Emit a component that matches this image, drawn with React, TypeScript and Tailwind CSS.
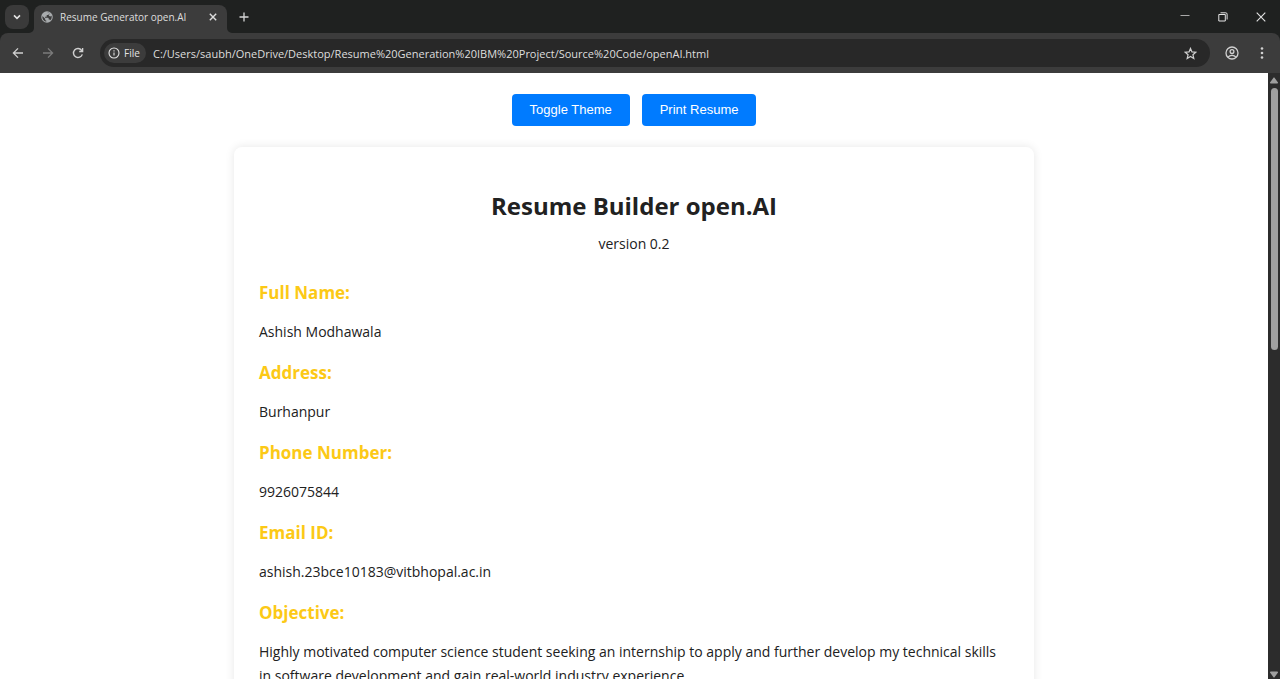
import type { ReactNode } from "react";

const sections = [
  { title: "Full Name:", text: "Ashish Modhawala" },
  { title: "Address:", text: "Burhanpur" },
  { title: "Phone Number:", text: "9926075844" },
  { title: "Email ID:", text: "ashish.23bce10183@vitbhopal.ac.in" },
  {
    title: "Objective:",
    text: "Highly motivated computer science student seeking an internship to apply and further develop my technical skills in software development and gain real-world industry experience.",
  },
];

function IconButton({ label, className, children }: { label: string; className: string; children: ReactNode }) {
  return (
    <button type="button" aria-label={label} className={`flex shrink-0 items-center justify-center ${className}`}>
      {children}
    </button>
  );
}

function TabStrip() {
  return (
    <div className="flex h-[33px] shrink-0 items-end bg-[#1f2120] pl-[5px]">
      <IconButton label="Search tabs" className="mb-1 h-6 w-6 rounded-lg bg-[#3a3a3a] text-[#e3e3e3]">
        <svg width="10" height="10" viewBox="0 0 10 10" fill="none" stroke="currentColor" strokeWidth="1.6">
          <path d="M2 3.4 5 6.4 8 3.4" />
        </svg>
      </IconButton>
      <svg width="5" height="5" viewBox="0 0 5 5" fill="#3c3c3c" className="shrink-0">
        <path d="M5 0v5H0A5 5 0 0 0 5 0Z" />
      </svg>
      <div className="flex h-7 w-[193px] items-center rounded-t-lg bg-[#3c3c3c] pr-2 pb-1 pl-[7px] text-[#dedede]">
        <svg width="12" height="12" viewBox="0 0 24 24" className="shrink-0">
          <circle cx="12" cy="12" r="11.5" fill="#a8abad" />
          <path
            d="M12 2.6c2 0 3.900.6 5.400 1.700l-1.500 2.400c-.5.8-1.300 1.300-2.200 1.300h-2.300v2.300c0 .6-.5 1.100-1.100 1.100H8v2.300h5.400c1.200 0 2 .9 2 2v1.200h1.200c1.100 0 2 .7 2.300 1.600A9.400 9.400 0 0 0 21.400 12c0-.9-.1-1.800-.4-2.600l-2.400 1.500-3.200-1.200 2.200-5.200"
            fill="#3c3c3c"
          />
          <path d="M2.900 10 8.300 15.500v1.300c0 1.200 1 2.200 2.200 2.200v2.300A9.400 9.400 0 0 1 2.900 10Z" fill="#3c3c3c" />
        </svg>
        <span className="ml-[7px] flex-1 text-[10px] leading-4 whitespace-nowrap">Resume Generator open.AI</span>
        <IconButton label="Close tab" className="h-3 w-3">
          <svg width="10" height="10" viewBox="0 0 10 10" fill="none" stroke="currentColor" strokeWidth="1.4">
            <path d="m1.800 1.800 6.400 6.400M8.200 1.800 1.800 8.200" />
          </svg>
        </IconButton>
      </div>
      <svg width="5" height="5" viewBox="0 0 5 5" fill="#3c3c3c" className="shrink-0">
        <path d="M0 0v5h5A5 5 0 0 1 0 0Z" />
      </svg>
      <IconButton label="New tab" className="mb-2 ml-1 h-4 w-4 text-[#d6d6d6]">
        <svg width="10" height="10" viewBox="0 0 10 10" fill="none" stroke="currentColor" strokeWidth="1.300">
          <path d="M5 .5v9M.5 5h9" />
        </svg>
      </IconButton>
      <div className="ml-auto flex h-full text-[#e4e4e4]">
        <IconButton label="Minimize" className="w-[38px]">
          <svg width="10" height="10" viewBox="0 0 10 10" fill="none" stroke="currentColor" strokeOpacity="0.7">
            <path d="M.5 3.500h9" />
          </svg>
        </IconButton>
        <IconButton label="Restore" className="w-[38px]">
          <svg width="10" height="10" viewBox="0 0 10 10" fill="none" stroke="currentColor">
            <path d="M.8 2.500h6.500v6.500H.8zM2.500.8h5.300c.8 0 1.300.5 1.300 1.300v5.400" />
          </svg>
        </IconButton>
        <IconButton label="Close window" className="w-[38px]">
          <svg width="10" height="10" viewBox="0 0 10 10" fill="none" stroke="currentColor" strokeWidth="1.100">
            <path d="m.7.7 8.600 8.600M9.300.7.700 9.300" />
          </svg>
        </IconButton>
      </div>
    </div>
  );
}

function Toolbar() {
  return (
    <div className="bg-[#1f2120]">
      <div className="flex h-10 items-center rounded-t-lg bg-[#3c3c3c] pr-[10px] pl-[10px] text-[#d0d0d0]">
        <IconButton label="Back" className="h-4 w-4">
          <svg width="12" height="12" viewBox="0 0 12 12" fill="none" stroke="currentColor" strokeWidth="1.300">
            <path d="M11 6H1.600M6 1.400 1.400 6 6 10.600" />
          </svg>
        </IconButton>
        <IconButton label="Forward" className="ml-[14px] h-4 w-4 text-[#7b7b7b]">
          <svg width="12" height="12" viewBox="0 0 12 12" fill="none" stroke="currentColor" strokeWidth="1.300">
            <path d="M1 6h9.400M6 1.400 10.600 6 6 10.600" />
          </svg>
        </IconButton>
        <IconButton label="Reload" className="ml-[14px] h-4 w-4">
          <svg width="12" height="12" viewBox="0 0 12 12" fill="none" stroke="currentColor" strokeWidth="1.400">
            <path d="M10.300 7.400A4.500 4.500 0 1 1 9.600 3.300L10.500 4.300M10.600 1v3.500H7.200" />
          </svg>
        </IconButton>
        <div className="ml-[14px] flex h-7 flex-1 items-center rounded-full bg-[#282828] pr-3 pl-1">
          <button
            type="button"
            className="flex h-5 w-[42px] shrink-0 items-center gap-1 rounded-full bg-[#3c3c3c] pl-1 text-[10px] font-medium text-[#e3e3e3]"
          >
            <svg width="12" height="12" viewBox="0 0 12 12" fill="none" stroke="currentColor" strokeWidth="1.100">
              <circle cx="6" cy="6" r="5" />
              <path d="M6 5.400v3.200M6 3.200v1.200" />
            </svg>
            File
          </button>
          <input
            type="text"
            aria-label="Address"
            defaultValue="C:/Users/saubh/OneDrive/Desktop/Resume%20Generation%20IBM%20Project/Source%20Code/openAI.html"
            className="ml-[7px] h-6 min-w-0 flex-1 bg-transparent text-[11px] text-[#dedede] outline-none"
          />
          <IconButton label="Bookmark this page" className="h-4 w-4">
            <svg width="13" height="13" viewBox="0 0 14 14" fill="none" stroke="currentColor" strokeWidth="1.300">
              <path d="m7 1.500 1.600 3.800 4.100.35-3.100 2.700.95 4L7 10.200l-3.550 2.150.95-4-3.100-2.700 4.100-.35Z" />
            </svg>
          </IconButton>
        </div>
        <IconButton label="Profile" className="ml-[14px] h-4 w-4">
          <svg width="14" height="14" viewBox="0 0 14 14" fill="none" stroke="currentColor" strokeWidth="1.300">
            <circle cx="7" cy="7" r="6" />
            <circle cx="7" cy="5.600" r="1.900" />
            <path d="M3 11.200C4.100 9.900 5.500 9.400 7 9.400s2.900.5 4 1.800" />
          </svg>
        </IconButton>
        <IconButton label="Menu" className="ml-[14px] h-4 w-4">
          <svg width="12" height="14" viewBox="0 0 12 14" fill="currentColor">
            <circle cx="6" cy="2.500" r="1.300" />
            <circle cx="6" cy="7" r="1.300" />
            <circle cx="6" cy="11.500" r="1.300" />
          </svg>
        </IconButton>
      </div>
    </div>
  );
}

function ScrollTrack() {
  return (
    <div aria-hidden="true" className="flex w-3 shrink-0 flex-col items-center bg-[#2c2c2c] pt-1">
      <svg width="8" height="7" viewBox="0 0 8 7" fill="#9f9f9f" className="shrink-0">
        <path d="M3.500.700Q4 0 4.500.700L8 5.500Q8.200 6.500 7.300 6.500H.700Q-.2 6.500 0 5.500Z" />
      </svg>
      <div className="mt-1 h-[262px] w-[7px] rounded-full bg-[#9f9f9f]" />
      <svg width="8" height="7" viewBox="0 0 8 7" fill="#9f9f9f" className="mt-auto mb-px shrink-0">
        <path d="M3.500 6.300Q4 7 4.500 6.300L8 1.500Q8.200.5 7.300.5H.700Q-.2.5 0 1.500Z" />
      </svg>
    </div>
  );
}

function ActionButton({ children }: { children: ReactNode }) {
  return (
    <button
      type="button"
      className="h-8 rounded bg-[#007bff] px-[18px] font-['Liberation_Sans',sans-serif] text-[13px] text-white"
    >
      {children}
    </button>
  );
}

export default function App() {
  return (
    <div className="flex h-screen flex-col overflow-hidden bg-white font-['Open_Sans','Noto_Sans',sans-serif]">
      <TabStrip />
      <Toolbar />
      <div className="flex min-h-0 flex-1">
        <main className="min-w-0 flex-1 overflow-hidden px-6 pt-[21px] text-[#212121]">
          <div className="flex justify-center gap-3">
            <ActionButton>Toggle Theme</ActionButton>
            <ActionButton>Print Resume</ActionButton>
          </div>
          <article className="mx-auto mt-[21px] max-w-[800px] rounded-lg bg-white px-[25px] pt-[39px] pb-10 shadow-[0_0_10px_rgba(0,0,0,0.1)]">
            <h1 className="text-center text-2xl leading-10 font-bold">Resume Builder open.AI</h1>
            <p className="mt-[6px] text-center text-sm leading-6">version 0.2</p>
            <div className="mt-[21px] flex flex-col gap-[13px]">
              {sections.map((section) => (
                <section key={section.title}>
                  <h2 className="text-[17px] leading-8 font-bold text-[#fcc916]">{section.title}</h2>
                  <p className="mt-[11px] text-sm leading-6">{section.text}</p>
                </section>
              ))}
            </div>
          </article>
        </main>
        <ScrollTrack />
      </div>
    </div>
  );
}
